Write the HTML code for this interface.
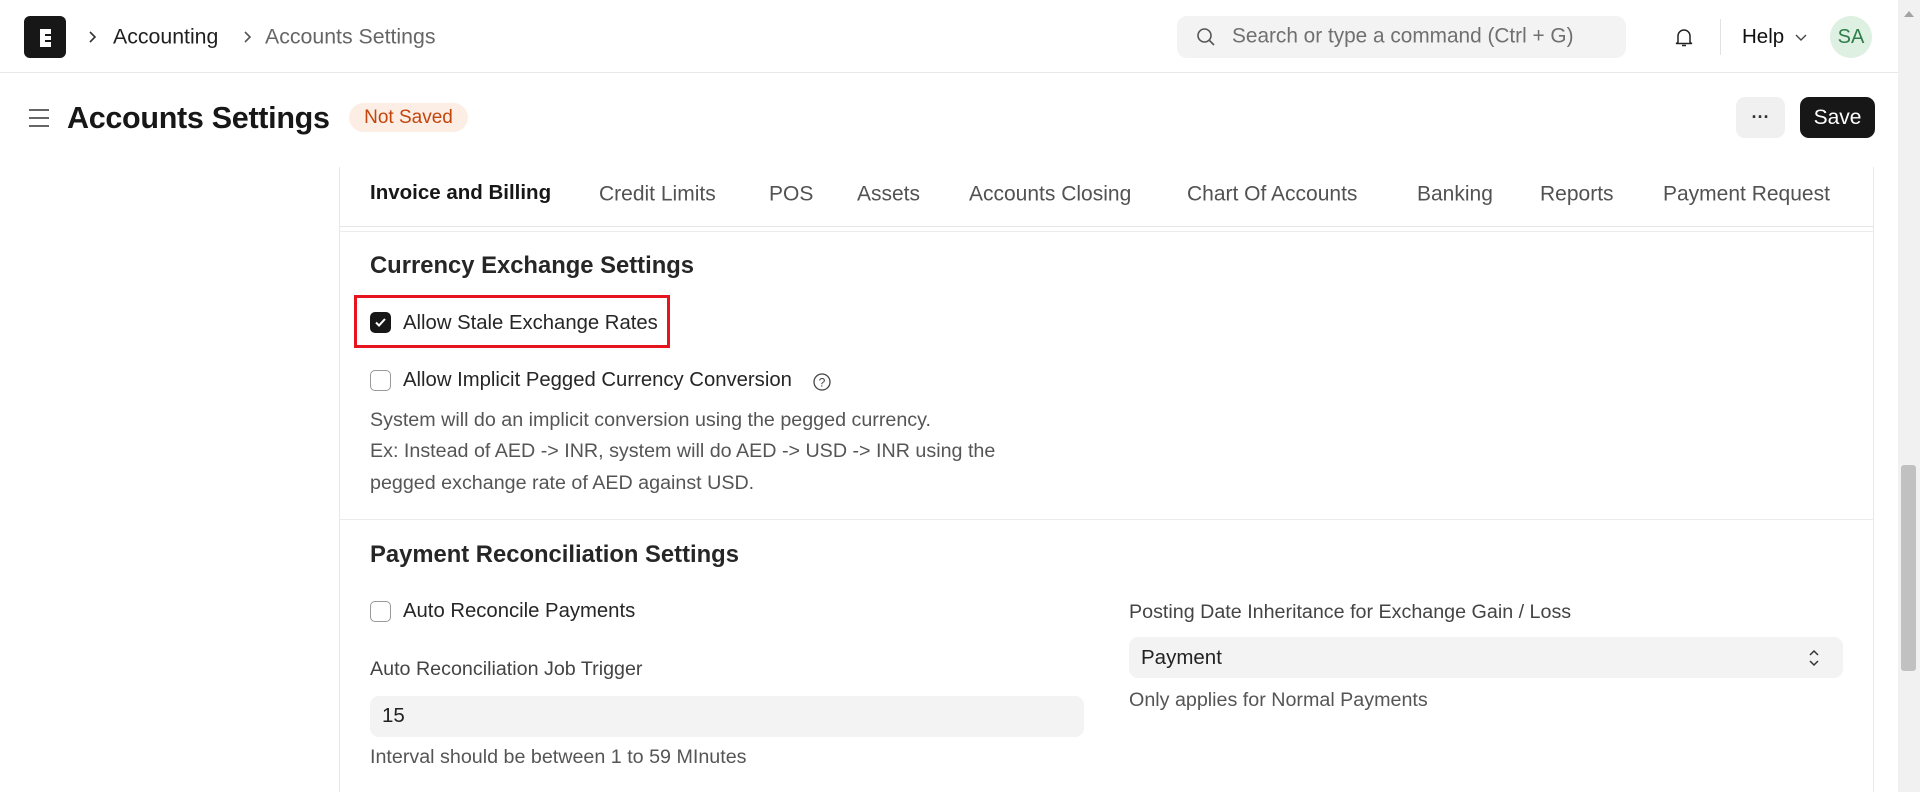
<!DOCTYPE html>
<html><head><meta charset="utf-8"><style>
*{margin:0;padding:0;box-sizing:border-box}
body{width:1920px;height:792px;overflow:hidden;background:#fff;font-family:"Liberation Sans",Arial,sans-serif;color:#1f1f1f;position:relative}
.a{position:absolute;white-space:nowrap;line-height:1}
.t{transform:translateY(-50%)}
.cb{position:absolute;width:21px;height:21px;border:1.5px solid #999;border-radius:5px;background:#fff}
.cb.on{background:#171717;border-color:#171717}
</style></head><body>
<!-- header -->
<div class="a" style="left:24px;top:16px;width:42px;height:42px;background:#171717;border-radius:6px"></div>
<svg class="a" style="left:24px;top:16px" width="42" height="42"><path d="M16 13h11v5h-6v2h6v4h-6v2h6v5H16z" fill="#fff"/></svg>
<svg class="a" style="left:88px;top:31px" width="10" height="12"><path d="M2 1l5 5-5 5" stroke="#333" stroke-width="1.6" fill="none"/></svg>
<div class="a t" style="left:113px;top:37px;font-size:21.3px;color:#1f1f1f">Accounting</div>
<svg class="a" style="left:243px;top:31px" width="10" height="12"><path d="M2 1l5 5-5 5" stroke="#555" stroke-width="1.6" fill="none"/></svg>
<div class="a t" style="left:265px;top:37px;font-size:21.3px;color:#666">Accounts Settings</div>
<div class="a" style="left:1177px;top:16px;width:449px;height:42px;background:#f3f3f3;border-radius:10px"></div>
<svg class="a" style="left:1196px;top:27px" width="20" height="20"><circle cx="8.5" cy="8.5" r="6.5" stroke="#555" stroke-width="1.6" fill="none"/><path d="M13.5 13.5l4.5 4.5" stroke="#555" stroke-width="1.6"/></svg>
<div class="a t" style="left:1232px;top:37px;font-size:20.8px;color:#707070">Search or type a command (Ctrl + G)</div>
<svg class="a" style="left:1672px;top:25px" width="24" height="24"><path d="M6 17V11a6 6 0 0 1 12 0v6l1.5 1.5h-15z M10 20.5h4" stroke="#222" stroke-width="1.5" fill="none" stroke-linejoin="round"/></svg>
<div class="a" style="left:1720px;top:19px;width:1px;height:36px;background:#e2e2e2"></div>
<div class="a t" style="left:1742px;top:37px;font-size:20.5px;color:#111">Help</div>
<svg class="a" style="left:1794px;top:33px" width="14" height="9"><path d="M2 2l5 5 5-5" stroke="#444" stroke-width="1.4" fill="none"/></svg>
<div class="a" style="left:1830px;top:16px;width:42px;height:42px;border-radius:50%;background:#ddf0e2;color:#2e7d4a;font-size:20px;text-align:center;line-height:42px">SA</div>
<div class="a" style="left:0;top:72px;width:1898px;height:1px;background:#e8e8e8"></div>
<!-- scrollbar -->
<div class="a" style="left:1898px;top:0;width:22px;height:792px;background:#f1f1f1"></div>
<svg class="a" style="left:1903px;top:10px" width="12" height="8"><path d="M1 7l5-6 5 6z" fill="#a3a3a3"/></svg>
<div class="a" style="left:1901px;top:465px;width:15px;height:206px;background:#c1c1c1;border-radius:3px"></div>
<!-- title row -->
<svg class="a" style="left:28px;top:107px" width="22" height="22"><path d="M1 3h20M1 11h20M1 19h20" stroke="#333" stroke-width="1.6"/></svg>
<div class="a t" style="left:67px;top:118px;font-size:30.5px;font-weight:bold;color:#171717;letter-spacing:-0.3px">Accounts Settings</div>
<div class="a" style="left:349px;top:103px;width:119px;height:29px;border-radius:15px;background:#fdeee5;color:#c4450c;font-size:19px;text-align:center;line-height:29px">Not Saved</div>
<div class="a" style="left:1736px;top:97px;width:49px;height:41px;border-radius:9px;background:#f0f0f0;text-align:center;line-height:41px;font-size:18px;font-weight:bold;color:#333">···</div>
<div class="a" style="left:1800px;top:97px;width:75px;height:41px;border-radius:9px;background:#171717;color:#fff;text-align:center;line-height:41px;font-size:21px">Save</div>
<!-- card -->
<div class="a" style="left:339px;top:167px;width:1px;height:625px;background:#e8e8e8"></div>
<div class="a" style="left:1873px;top:167px;width:1px;height:625px;background:#e8e8e8"></div>
<div class="a" style="left:339px;top:226px;width:1535px;height:1px;background:#e6e6e6"></div>
<div class="a" style="left:339px;top:231px;width:1535px;height:1px;background:#ececec"></div>
<div style="font-size:21px;color:#525252">
<div class="a t" style="left:370px;top:193px;color:#171717;font-weight:600;font-size:20.5px">Invoice and Billing</div>
<div class="a t" style="left:599px;top:194px">Credit Limits</div>
<div class="a t" style="left:769px;top:194px">POS</div>
<div class="a t" style="left:857px;top:194px">Assets</div>
<div class="a t" style="left:969px;top:194px">Accounts Closing</div>
<div class="a t" style="left:1187px;top:194px">Chart Of Accounts</div>
<div class="a t" style="left:1417px;top:194px">Banking</div>
<div class="a t" style="left:1540px;top:194px">Reports</div>
<div class="a t" style="left:1663px;top:194px">Payment Request</div>
</div>
<!-- currency section -->
<div class="a t" style="left:370px;top:266px;font-size:23.8px;font-weight:bold;color:#262626">Currency Exchange Settings</div>
<div class="a" style="left:354px;top:295px;width:316px;height:53px;border:3px solid #e5141f"></div>
<div class="cb on" style="left:370px;top:312px"></div>
<svg class="a" style="left:370px;top:312px" width="21" height="21"><path d="M6 10.5l3 3 6-6.5" stroke="#fff" stroke-width="2" fill="none"/></svg>
<div class="a t" style="left:403px;top:323px;font-size:20.3px;color:#262626">Allow Stale Exchange Rates</div>
<div class="cb" style="left:370px;top:370px"></div>
<div class="a t" style="left:403px;top:380px;font-size:20.3px;color:#262626">Allow Implicit Pegged Currency Conversion</div>
<svg class="a" style="left:812px;top:372px" width="20" height="20"><circle cx="10" cy="10" r="8" stroke="#444" stroke-width="1.3" fill="none"/><text x="10" y="14.5" font-size="12" text-anchor="middle" fill="#444" font-family="Liberation Sans">?</text></svg>
<div class="a t" style="left:370px;top:421px;font-size:19.7px;color:#555">System will do an implicit conversion using the pegged currency.</div>
<div class="a t" style="left:370px;top:452px;font-size:19.7px;color:#555">Ex: Instead of AED -&gt; INR, system will do AED -&gt; USD -&gt; INR using the</div>
<div class="a t" style="left:370px;top:484px;font-size:19.7px;color:#555">pegged exchange rate of AED against USD.</div>
<div class="a" style="left:339px;top:519px;width:1535px;height:1px;background:#ececec"></div>
<!-- payment reconciliation -->
<div class="a t" style="left:370px;top:555px;font-size:23.8px;font-weight:bold;color:#262626">Payment Reconciliation Settings</div>
<div class="cb" style="left:370px;top:601px"></div>
<div class="a t" style="left:403px;top:611px;font-size:20.3px;color:#262626">Auto Reconcile Payments</div>
<div class="a t" style="left:370px;top:670px;font-size:19.7px;color:#444">Auto Reconciliation Job Trigger</div>
<div class="a" style="left:370px;top:696px;width:714px;height:41px;background:#f3f3f3;border-radius:9px"></div>
<div class="a t" style="left:382px;top:716px;font-size:20.5px;color:#222">15</div>
<div class="a t" style="left:370px;top:758px;font-size:19.7px;color:#555">Interval should be between 1 to 59 MInutes</div>
<div class="a t" style="left:1129px;top:613px;font-size:19.7px;color:#444">Posting Date Inheritance for Exchange Gain / Loss</div>
<div class="a" style="left:1129px;top:637px;width:714px;height:41px;background:#f3f3f3;border-radius:9px"></div>
<div class="a t" style="left:1141px;top:658px;font-size:20.5px;color:#222">Payment</div>
<svg class="a" style="left:1808px;top:648px" width="12" height="20"><path d="M2 7l4-4 4 4M2 13l4 4 4-4" stroke="#333" stroke-width="1.5" fill="none"/></svg>
<div class="a t" style="left:1129px;top:701px;font-size:19.7px;color:#555">Only applies for Normal Payments</div>
</body></html>
